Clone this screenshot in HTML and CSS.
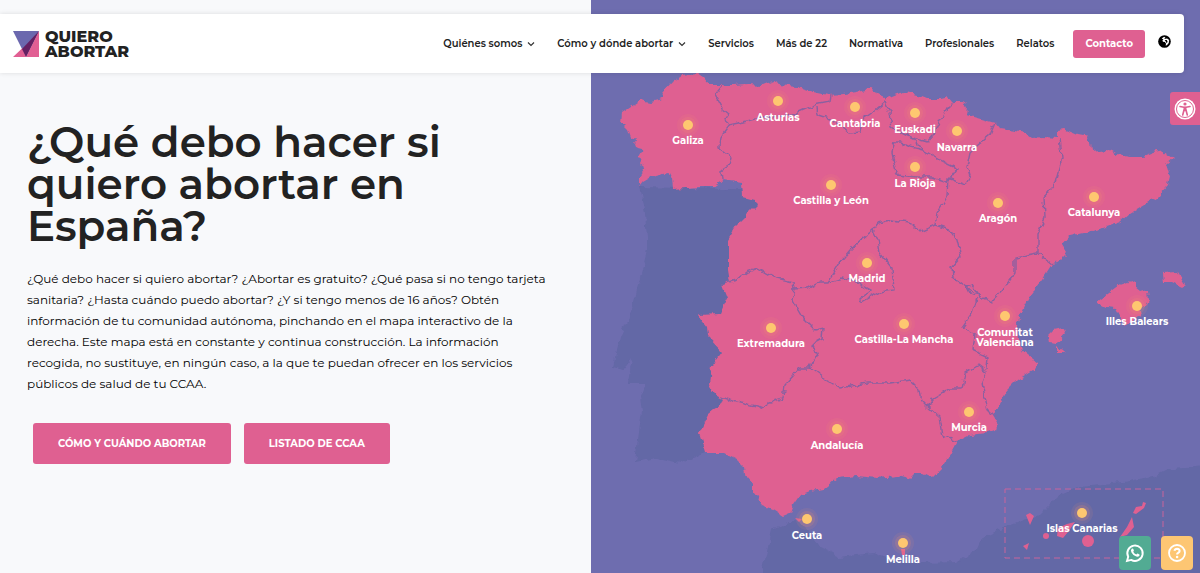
FILE: index.html
```html
<!DOCTYPE html>
<html lang="es">
<head>
<meta charset="utf-8">
<meta name="viewport" content="width=device-width, initial-scale=1">
<title>Quiero Abortar</title>
<link rel="stylesheet" href="styles.css">
</head>
<body>
<header class="site-header">
  <a class="brand" href="#">
    <svg class="brand-mark" viewBox="0 0 26 26" aria-hidden="true"><path d="M0 0H26L13 26Z" fill="#6b68ae"/><path d="M26 0V26H0L9.500 17L13 26Z" fill="#e15f93"/><path d="M26 0L13 26L9 18Z" fill="#651f62"/></svg>
    <span class="brand-name">QUIERO<br>ABORTAR</span>
  </a>
  <nav class="main-nav" aria-label="Principal">
    <a href="#">Quiénes somos <svg class="chevron" viewBox="0 0 8 8" aria-hidden="true"><path d="M1 2.500L4 5.500L7 2.500"/></svg></a>
    <a href="#">Cómo y dónde abortar <svg class="chevron" viewBox="0 0 8 8" aria-hidden="true"><path d="M1 2.500L4 5.500L7 2.500"/></svg></a>
    <a href="#">Servicios</a>
    <a href="#">Más de 22</a>
    <a href="#">Normativa</a>
    <a href="#">Profesionales</a>
    <a href="#">Relatos</a>
  </nav>
  <a class="contact" href="#">Contacto</a>
  <button class="language" aria-label="Idioma"><svg viewBox="0 0 14 14" aria-hidden="true"><circle cx="7" cy="7" r="6.800"/><path fill="#fff" d="M4 3.800L6.500 2L8 2.600L6.600 4.200L9.800 3.800L12 5.500L11.600 8.500L9.800 10.800L8.300 11.600L8.600 9.200L7.400 7.600L5.300 7.400L4.800 5.700L6 4.900Z"/><path d="M7.200 5.400L9.500 5.500L10.300 7.200L9.300 8.800L8.500 7.200Z"/></svg></button>
</header>
<main class="hero">
  <section class="intro">
    <h1>¿Qué debo hacer si quiero abortar en España?</h1>
    <p>¿Qué debo hacer si quiero abortar? ¿Abortar es gratuito? ¿Qué pasa si no tengo tarjeta sanitaria? ¿Hasta cuándo puedo abortar? ¿Y si tengo menos de 16 años? Obtén información de tu comunidad autónoma, pinchando en el mapa interactivo de la derecha. Este mapa está en constante y continua construcción. La información recogida, no sustituye, en ningún caso, a la que te puedan ofrecer en los servicios públicos de salud de tu CCAA.</p>
    <div class="actions">
      <a class="button" href="#">CÓMO Y CUÁNDO ABORTAR</a>
      <a class="button" href="#">LISTADO DE CCAA</a>
    </div>
  </section>
  <section class="map-panel" aria-label="Mapa interactivo">
    <svg class="map" viewBox="591 0 609 573" preserveAspectRatio="xMidYMin slice">
      <defs>
        <filter id="coast" filterUnits="userSpaceOnUse" x="591" y="0" width="609" height="573">
          <feTurbulence type="fractalNoise" baseFrequency="0.13" numOctaves="2" seed="4"/>
          <feDisplacementMap in="SourceGraphic" scale="7" xChannelSelector="R" yChannelSelector="G"/>
        </filter>
        <g id="pin"><circle r="11" fill="#f5906f" opacity=".1"/><circle r="8" fill="#f5906f" opacity=".18"/><circle r="5" fill="#fec770"/></g>
      </defs>
      <g filter="url(#coast)">
        <path class="neighbour" d="M639 187L645 213L647 238L647 250L640 277L632 310L620 337L613 367L623 370L632 358L628 383L645 383L640 397L642 410L635 462L657 458L680 463L705 453L760 380L770 190Z"/>
        <path class="neighbour" d="M758 590L772 530L790 522L803 523L820 547L840 557L873 553L900 563L923 563L957 562L977 550L983 537L1023 520L1037 517L1057 497L1080 487L1123 483L1153 477L1167 470L1210 464V590Z"/>
        <path class="land" d="M639 187L639 177L645 168L640 164L643 158L639 157L643 150L635 148L633 142L637 137L631 138L628 130L621 123L622 113L637 103L640 100L650 102L662 99L663 92L672 82L682 75L697 73L703 77L710 85L733 85L747 84L763 85L773 81L780 85L797 87L813 92L828 95L843 94L857 92L870 89L877 93L887 98L897 94L905 92L917 95L927 99L940 99L948 97L952 102L963 102L967 105L966 115L977 118L995 123L1000 129L1015 131L1025 133L1032 138L1043 137L1058 138L1058 130L1063 129L1077 135L1088 137L1091 142L1092 152L1107 150L1117 155L1130 157L1143 157L1153 153L1163 151L1173 158L1166 164L1170 177L1168 185L1157 197L1130 213L1120 222L1103 228L1087 232L1070 236L1062 245L1067 253L1058 262L1052 264L1043 278L1030 295L1022 312L1017 323L1018 340L1023 352L1037 363L1033 370L1017 380L1007 390L1000 403L993 417L998 425L997 429L987 433L970 435L957 442L950 455L942 468L933 477L923 472L915 472L908 479L897 476L877 478L857 476L837 478L823 489L810 491L800 495L793 505L790 513L783 516L772 509L762 505L753 493L753 485L747 478L745 468L737 460L723 453L705 453L699 433L708 415L718 407L723 400L717 397L709 383L711 367L722 352L708 337L707 327L698 315L720 314L727 298L722 285L730 282L728 270L728 240L737 225L757 205L755 200L743 197L742 183L723 180L713 187L700 187L673 189L672 180L668 172L655 175L643 182Z"/>
        <path class="land" d="M1097 302L1120 285L1135 280L1135 288L1140 292L1147 290L1148 300L1143 310L1138 317L1125 327L1120 317L1115 308L1107 307Z M1162 273L1177 272L1185 285L1182 287L1172 282L1163 282Z M1048 335L1053 330L1066 327L1067 332L1057 343L1049 342Z M1057 345L1059 350L1066 353L1057 353Z"/>
        <g class="borders">
          <path d="M723 85L715 95L722 108L728 113L723 120L729 125L720 137L719 148L732 158L730 165L722 170L723 180"/>
          <path d="M729 125L743 122L763 117L790 116L808 108L815 105L830 102L831 95M817 107L818 115L830 119L843 127L850 133L860 132L862 120L873 112L885 102L887 97"/>
          <path d="M885 102L890 113L892 127L900 132L913 138L927 142L933 135L940 120L947 108L953 102M913 138L923 150"/>
          <path d="M895 142L892 153L895 167L897 175L917 177L933 177L947 182L957 168L940 160L923 150L910 147L900 142Z"/>
          <path d="M995 123L990 135L978 145L970 153L967 167L970 177L965 185L948 178L947 197L937 213L935 225L950 230L957 240L961 257L952 267L953 277L967 287L980 297L992 302L1003 290L1015 273L1015 257L1037 253L1052 264"/>
          <path d="M1060 138L1062 157L1055 183L1044 197L1045 217L1038 233L1038 253"/>
          <path d="M935 225L920 232L910 222L890 220L878 223L873 230L857 243L840 263L828 282L820 282L807 289L794 290L793 282L773 277L757 268L747 272L737 280L725 283"/>
          <path d="M873 230L878 240L880 253L892 268L894 290L880 292L862 302L859 300L872 290L857 282L843 278L830 282"/>
          <path d="M794 290L792 300L802 317L815 330L823 328L822 340L813 345L817 355L810 368L800 368L785 385L783 398L770 402L760 408L740 403L720 397"/>
          <path d="M810 368L823 378L840 388L867 383L890 383L910 380L920 390L922 402L927 407L933 398L950 388L962 388L965 373L978 365L987 372L982 383L985 397L988 410L996 418"/>
          <path d="M927 405L940 417L943 435L957 442M977 298L972 313L962 327L975 335L973 350L988 357L987 370M967 287L972 285L980 297L970 293Z"/>
        </g>
      </g>
      <g class="land">
        <path d="M1026 515L1030 513L1034 516L1030 525ZM1023 546L1029 543L1027 550ZM1075 522L1068 532L1063 538L1057 536L1058 528L1067 524ZM1132 517L1134 527L1127 535L1120 537L1127 527ZM1143 502L1146 503L1144 508L1136 514L1133 513L1136 507L1142 506Z"/>
        <circle cx="1046" cy="536" r="3"/><circle cx="1088" cy="541" r="6"/><path d="M795 518L802 519L799 522ZM901 549H905V555H902Z"/>
      </g>
      <path class="inset" d="M1005 489H1163V558H1005Z"/>
      <g class="regions">
        <a href="#"><use href="#pin" x="688" y="125"/><text x="688" y="144">Galiza</text></a>
        <a href="#"><use href="#pin" x="778" y="101"/><text x="778" y="121">Asturias</text></a>
        <a href="#"><use href="#pin" x="855" y="107"/><text x="855" y="127">Cantabria</text></a>
        <a href="#"><use href="#pin" x="915" y="113"/><text x="915" y="133">Euskadi</text></a>
        <a href="#"><use href="#pin" x="957" y="131"/><text x="957" y="151">Navarra</text></a>
        <a href="#"><use href="#pin" x="915" y="167"/><text x="915" y="187">La Rioja</text></a>
        <a href="#"><use href="#pin" x="831" y="185"/><text x="831" y="204">Castilla y León</text></a>
        <a href="#"><use href="#pin" x="998" y="203"/><text x="998" y="222">Aragón</text></a>
        <a href="#"><use href="#pin" x="1094" y="197"/><text x="1094" y="216">Catalunya</text></a>
        <a href="#"><use href="#pin" x="867" y="263"/><text x="867" y="282">Madrid</text></a>
        <a href="#"><use href="#pin" x="771" y="328"/><text x="771" y="347">Extremadura</text></a>
        <a href="#"><use href="#pin" x="904" y="324"/><text x="904" y="343">Castilla-La Mancha</text></a>
        <a href="#"><use href="#pin" x="1005" y="316"/><text x="1005" y="336">Comunitat<tspan x="1005" dy="10">Valenciana</tspan></text></a>
        <a href="#"><use href="#pin" x="1137" y="306"/><text x="1137" y="325">Illes Balears</text></a>
        <a href="#"><use href="#pin" x="969" y="412"/><text x="969" y="431">Murcia</text></a>
        <a href="#"><use href="#pin" x="837" y="429"/><text x="837" y="449">Andalucía</text></a>
        <a href="#"><use href="#pin" x="807" y="519"/><text x="807" y="539">Ceuta</text></a>
        <a href="#"><use href="#pin" x="903" y="543"/><text x="903" y="563">Melilla</text></a>
        <a href="#"><use href="#pin" x="1082" y="513"/><text x="1082" y="532">Islas Canarias</text></a>
      </g>
    </svg>
  </section>
</main>
<button class="accessibility" aria-label="Accesibilidad"><svg viewBox="0 0 22 22" aria-hidden="true"><circle cx="11" cy="11" r="10.500" fill="#fff"/><circle cx="11" cy="11" r="8.500" fill="none" stroke="#df6091"/><circle cx="11" cy="6" r="1.600" fill="#df6091"/><path d="M6 8.500L10 9.300H12L16 8.500M11 9V12.500M10 12L8.700 17M12 12L13.300 17" fill="none" stroke="#df6091" stroke-width="1.600" stroke-linecap="round"/><path d="M9.500 9H12.500V13H9.500Z" fill="#df6091"/></svg></button>
<div class="help-tools">
  <a class="whatsapp" href="#" aria-label="WhatsApp"><svg viewBox="0 0 20 20" aria-hidden="true"><path d="M2 18L3.200 13.800A7.700 7.700 0 1 1 6.200 16.900Z" fill="none" stroke="#fff" stroke-width="1.900"/><path d="M6.700 5.800Q7.900 4.900 8.300 6L8.900 7.500Q9 8 8.200 8.800Q9.300 10.900 11.300 11.600L12.100 10.700Q12.500 10.300 13.100 10.700L14.400 11.400Q15 11.800 14.200 12.900Q12.800 14.300 10.300 13.100Q7.800 12 6.500 9.600Q5.200 7.200 6.700 5.800Z" fill="#fff"/></svg></a>
  <button class="help" aria-label="Ayuda"><svg viewBox="0 0 20 20" aria-hidden="true"><circle cx="10" cy="10" r="8" fill="none" stroke="#fff" stroke-width="1.800"/><path d="M7.400 7.800Q7.900 5.700 10.100 5.700Q12.600 5.800 12.600 7.900Q12.600 9 11.200 9.800Q10.100 10.400 10.100 11.500" fill="none" stroke="#fff" stroke-width="2.100"/><circle cx="10.100" cy="14" r="1.300" fill="#fff"/></svg></button>
</div>
</body>
</html>
```
FILE: styles.css
```css
* { box-sizing: border-box; }
body {
  margin: 0;
  background: #f8f9fb;
  color: #222;
  font-family: Montserrat, Inter, sans-serif;
}
a { color: inherit; text-decoration: none; }
button { padding: 0; border: 0; cursor: pointer; }
svg { display: block; }

.site-header {
  position: absolute;
  z-index: 2;
  top: 14px;
  left: 0;
  right: 16px;
  display: flex;
  align-items: center;
  min-height: 59px;
  padding: 0 13px;
  background: #fff;
  border-radius: 0 4px 4px 0;
  box-shadow: 0 0 5px rgba(0, 0, 0, .12);
}
.brand { display: flex; align-items: center; gap: 6px; margin-right: auto; }
.brand-mark { width: 26px; height: 26px; }
.brand-name { font-size: 16px; line-height: 15px; font-weight: 800; }
.main-nav { display: flex; gap: 22px; font-size: 10px; font-weight: 600; white-space: nowrap; }
.main-nav a { display: flex; align-items: center; gap: 5px; }
.chevron { width: 8px; height: 8px; fill: none; stroke: #333; stroke-width: 1.2; }
.contact {
  margin-left: 19px;
  padding: 7px 12px;
  border-radius: 3px;
  background: #df6091;
  color: #fff;
  font-size: 10px;
  line-height: 14px;
  font-weight: 700;
}
.language { width: 13px; height: 13px; margin: 0 0 5px 13px; background: none; }

.hero { display: grid; grid-template-columns: 591fr 609fr; min-height: 100vh; }
.intro { padding: 121px 40px 40px 27px; }
h1 {
  max-width: 450px;
  margin: 0;
  font-size: 42px;
  line-height: 42px;
  font-weight: 600;
}
.intro p {
  margin: 21px 0 0;
  color: #000;
  font-size: 12px;
  line-height: 21px;
  font-weight: 400;
}
.actions { display: flex; flex-wrap: wrap; gap: 13px; margin: 29px 6px 0; }
.button {
  padding: 13px 25px;
  border-radius: 3px;
  background: #df6091;
  color: #fff;
  font-size: 10px;
  line-height: 15px;
  font-weight: 700;
}

.map-panel { position: relative; overflow: hidden; background: #6e6daf; }
.map { position: absolute; inset: 0; width: 100%; height: 100%; }
.neighbour { fill: #6367a6; }
.land { fill: #df6091; }
.borders { fill: none; stroke: #8a60a0; stroke-width: 1.4; }
.inset { fill: none; stroke: #c8649c; stroke-dasharray: 6 4; }
.regions text {
  fill: #fff;
  font-size: 10px;
  font-weight: 700;
  text-anchor: middle;
}

.accessibility {
  position: fixed;
  z-index: 3;
  top: 92px;
  right: 0;
  display: grid;
  place-items: center;
  width: 30px;
  height: 33px;
  border-radius: 3px 0 0 3px;
  background: #df6091;
}
.accessibility svg { width: 22px; height: 22px; }
.help-tools { position: fixed; z-index: 3; right: 7px; bottom: 3px; display: flex; gap: 10px; }
.whatsapp, .help {
  display: grid;
  place-items: center;
  width: 32px;
  height: 34px;
  border-radius: 4px;
}
.whatsapp { background: #52ab93; }
.help { background: #fdc673; }
.help-tools svg { width: 20px; height: 20px; }
```
